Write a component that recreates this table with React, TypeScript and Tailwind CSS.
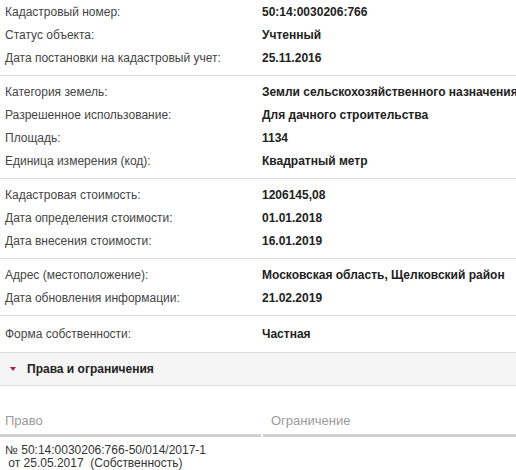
const groups: [string, string][][] = [
  [
    ['Кадастровый номер:', '50:14:0030206:766'],
    ['Статус объекта:', 'Учтенный'],
    ['Дата постановки на кадастровый учет:', '25.11.2016'],
  ],
  [
    ['Категория земель:', 'Земли сельскохозяйственного назначения'],
    ['Разрешенное использование:', 'Для дачного строительства'],
    ['Площадь:', '1134'],
    ['Единица измерения (код):', 'Квадратный метр'],
  ],
  [
    ['Кадастровая стоимость:', '1206145,08'],
    ['Дата определения стоимости:', '01.01.2018'],
    ['Дата внесения стоимости:', '16.01.2019'],
  ],
  [
    ['Адрес (местоположение):', 'Московская область, Щелковский район'],
    ['Дата обновления информации:', '21.02.2019'],
  ],
  [['Форма собственности:', 'Частная']],
];

export default function App() {
  return (
    <div className="w-[516px] h-[470px] overflow-hidden bg-white text-[12px] text-[#333] font-['Liberation_Sans',Arial,sans-serif]">
      {groups.map((rows, gi) => (
        <div
          key={gi}
          className={`${gi === 0 ? 'pt-0' : gi === groups.length - 1 ? 'pt-[6px]' : 'pt-1'} ${gi === groups.length - 1 ? 'pb-[7px]' : 'pb-[6px] border-b border-[#dddddd]'}`}
        >
          {rows.map(([label, value]) => (
            <div key={label} className="flex h-[23px] items-center">
              <div className="w-[262px] shrink-0 pl-[5px] text-[#444]">{label}</div>
              <div className="whitespace-nowrap font-bold text-[#222]">{value}</div>
            </div>
          ))}
        </div>
      ))}

      <div className="flex h-[34px] items-center border-y border-[#dddddd] bg-[#f5f5f5] pl-[10px]">
        <svg width="6" height="4" viewBox="0 0 6 4" className="mr-[11px]">
          <polygon points="0,0 6,0 3,4" fill="#a3223f" />
        </svg>
        <span className="text-[12px] font-bold text-[#222]">Права и ограничения</span>
      </div>

      <div className="mt-[27px] flex text-[13px] leading-[15px] text-[#9a9a9a]">
        <div className="w-[261px] border-b-[3px] border-[#d0d0d0] pb-[6px] pl-[5px]">Право</div>
        <div className="ml-[2px] flex-1 border-b-[3px] border-[#d0d0d0] pb-[6px] pl-[8px]">Ограничение</div>
      </div>
      <div className="pl-[5px] pt-[7px] leading-[13px] text-[#333]">
        <div>№ 50:14:0030206:766-50/014/2017-1</div>
        <div className="whitespace-pre"> от 25.05.2017  (Собственность)</div>
      </div>
    </div>
  );
}
